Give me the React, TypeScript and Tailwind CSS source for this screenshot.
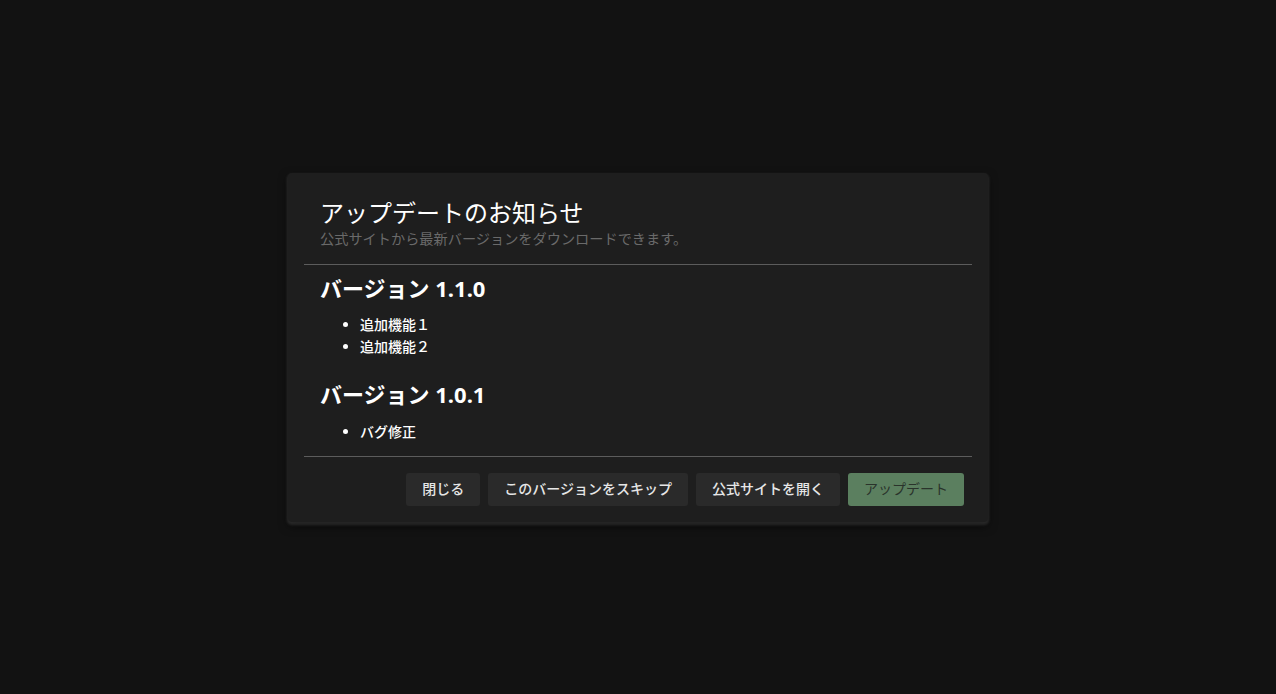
const App = () => {
  return (
    <div
      className="flex h-[694px] w-full items-center justify-center bg-[#121212]"
      style={{ fontFamily: '"Noto Sans", "Noto Sans CJK JP", sans-serif' }}
    >
      <div className="flex w-[700px] flex-col rounded-[4px] bg-[#1e1e1e] px-4 shadow-[0_2px_3px_1px_rgba(255,255,255,0.12),0_4px_10px_rgba(0,0,0,0.6)]">
        <div className="px-4 pt-6 pb-[15px]">
          <h2 className="text-2xl leading-8 text-white">アップデートのお知らせ</h2>
          <p className="text-[14.2px] leading-5 text-[#6a6a6a]">
            公式サイトから最新バージョンをダウンロードできます。
          </p>
        </div>
        <hr className="border-t border-[#5c5c5c]" />
        <div className="px-4 pt-[9px] pb-[13px] text-white">
          <h3 className="text-[22px] leading-7 font-bold">バージョン 1.1.0</h3>
          <ul className="mt-3 list-disc pl-10 text-sm leading-[22px] font-medium">
            <li>追加機能１</li>
            <li>追加機能２</li>
          </ul>
          <h3 className="mt-[22px] text-[22px] leading-7 font-bold">バージョン 1.0.1</h3>
          <ul className="mt-[13px] list-disc pl-10 text-sm leading-[22px] font-medium">
            <li>バグ修正</li>
          </ul>
        </div>
        <hr className="border-t border-[#5c5c5c]" />
        <div className="flex justify-end gap-2 pt-4 pr-2 pb-4">
          <button className="h-[33px] rounded-[3px] bg-[#2a2a2a] px-4 text-sm font-medium text-[#e6e6e6]">
            閉じる
          </button>
          <button className="h-[33px] rounded-[3px] bg-[#2a2a2a] px-4 text-sm font-medium text-[#e6e6e6]">
            このバージョンをスキップ
          </button>
          <button className="h-[33px] rounded-[3px] bg-[#2a2a2a] px-4 text-sm font-medium text-[#e6e6e6]">
            公式サイトを開く
          </button>
          <button className="h-[33px] rounded-[3px] bg-[#5b7f5f] px-4 text-sm text-[#2a332b]">
            アップデート
          </button>
        </div>
      </div>
    </div>
  );
};

export default App;
